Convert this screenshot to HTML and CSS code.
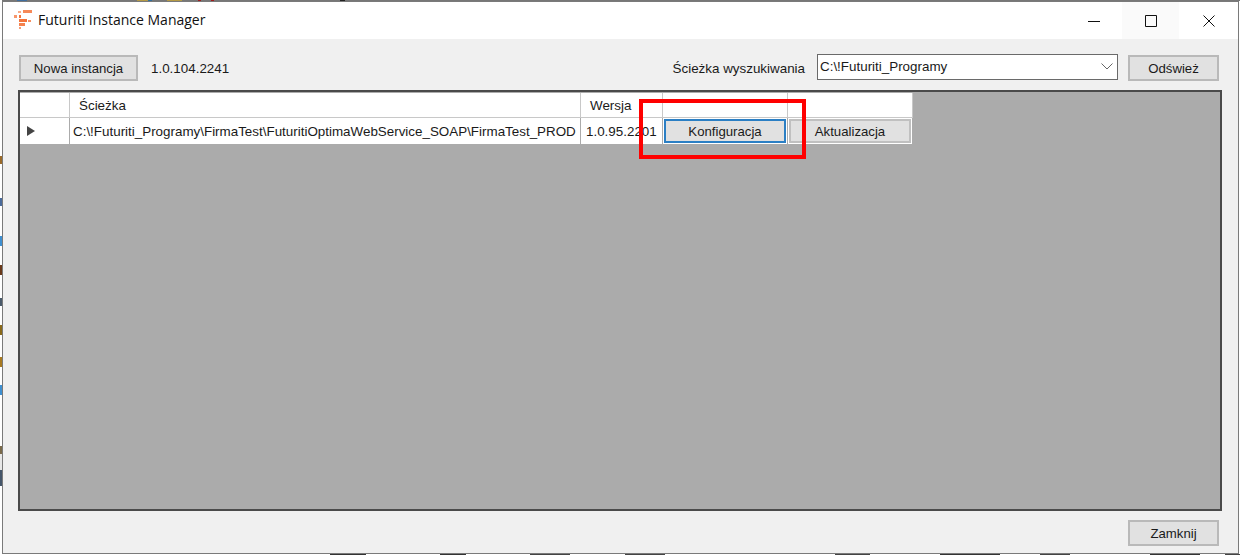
FILE: index.html
```html
<!DOCTYPE html>
<html lang="pl">
<head>
<meta charset="utf-8">
<title>Futuriti Instance Manager</title>
<link rel="stylesheet" href="styles.css">
</head>
<body>
<div class="backdrop-top"></div>
<div class="backdrop-left"></div>
<div class="backdrop-bottom"></div>
<div class="window">
  <header class="titlebar">
    <svg class="logo" width="20" height="20" viewBox="0 0 20 20">
      <g fill="#f4743b">
        <rect x="10" y="0" width="9" height="3" opacity=".85"/>
        <rect x="5" y="1" width="3" height="2" opacity=".6"/>
        <rect x="1" y="5" width="3" height="3" opacity=".75"/>
        <rect x="6" y="5" width="2" height="3"/>
        <rect x="6" y="9" width="8" height="3"/>
        <rect x="15" y="10" width="3" height="2" opacity=".8"/>
        <rect x="6" y="13" width="6" height="3" opacity=".9"/>
        <rect x="6" y="17" width="2" height="2" opacity=".7"/>
      </g>
    </svg>
    <span class="title">Futuriti Instance Manager</span>
    <div class="winctl">
      <span class="ctl"><svg width="12" height="12" viewBox="0 0 12 12"><path d="M0 6.500h12" stroke="#111" fill="none"/></svg></span>
      <span class="ctl ctl-hover"><svg width="12" height="12" viewBox="0 0 12 12"><path d="M.5.5h11v11H.5z" stroke="#111" fill="none"/></svg></span>
      <span class="ctl ctl-close"><svg width="12" height="12" viewBox="0 0 12 12"><path d="M.5.5l11 11M11.500.5l-11 11" stroke="#111" fill="none"/></svg></span>
    </div>
  </header>
  <main class="content">
    <div class="toolbar">
      <button class="btn btn-new">Nowa instancja</button>
      <span class="version">1.0.104.2241</span>
      <span class="search-label">Ścieżka wyszukiwania</span>
      <div class="combo">
        <span>C:\!Futuriti_Programy</span>
        <svg width="12" height="7" viewBox="0 0 12 7"><path d="M.5.5l5.500 5.500 5.500-5.500" stroke="#666" fill="none"/></svg>
      </div>
      <button class="btn btn-side">Odśwież</button>
    </div>
    <div class="grid">
      <div class="table">
        <div class="cell corner"></div>
        <div class="cell head">Ścieżka</div>
        <div class="cell head">Wersja</div>
        <div class="cell head"></div>
        <div class="cell head"></div>
        <div class="cell rowhead"><svg width="8" height="10" viewBox="0 0 8 10"><path d="M0 0l8 5-8 5z" fill="#444"/></svg></div>
        <div class="cell data">C:\!Futuriti_Programy\FirmaTest\FuturitiOptimaWebService_SOAP\FirmaTest_PROD</div>
        <div class="cell data data-version">1.0.95.2201</div>
        <div class="cell btncell"><button class="gridbtn gridbtn-focus">Konfiguracja</button></div>
        <div class="cell btncell"><button class="gridbtn">Aktualizacja</button></div>
      </div>
    </div>
    <div class="footer">
      <button class="btn btn-side">Zamknij</button>
    </div>
  </main>
  <div class="highlight"></div>
</div>
</body>
</html>
```
FILE: styles.css
```css
* { box-sizing: border-box; }
html, body { margin: 0; height: 100%; overflow: hidden; background: #fff; }
body { position: relative; padding: 1px 0 0 2px; font-family: "Liberation Sans", Arial, sans-serif; font-size: 13.400px; color: #1a1a1a; }

.backdrop-top { position: absolute; left: 0; top: 0; width: 100%; height: 1px; background: linear-gradient(90deg, #777 17px, #3f6d9e 17px 27px, #777 27px 137px, #b59a45 137px 148px, #2f6f9f 148px 152px, #777 152px 167px, #b59a45 167px 182px, #777 182px 198px, #a01c1c 198px 201px, #777 201px 211px, #a01c1c 211px 214px, #777 214px 340px, #222 340px 345px, #777 345px); }
.backdrop-left { position: absolute; left: 0; top: 0; width: 2px; height: 100%; background: linear-gradient(180deg, #fff 156px, #9a6a2a 156px 164px, #fff 164px 198px, #4a6a9a 198px 206px, #fff 206px 236px, #3f8fd0 236px 246px, #fff 246px 265px, #6a3a1a 265px 275px, #fff 275px 298px, #4a5a6a 298px 306px, #fff 306px 325px, #8a6a1a 325px 335px, #fff 335px 357px, #a87a20 357px 367px, #fff 367px 385px, #3f8fd0 385px 395px, #fff 395px 446px, #7a6a4a 446px 454px, #e8e8e8 454px 470px, #45566a 470px 486px, #fff 486px); }
.backdrop-bottom { position: absolute; left: 0; bottom: 0; width: 100%; height: 1px; background: linear-gradient(90deg, #fff 330px, #333 330px 366px, #fff 366px 440px, #333 440px 466px, #fff 466px 530px, #444 530px 570px, #fff 570px 625px, #444 625px 665px, #fff 665px 835px, #444 835px 870px, #fff 870px 940px, #333 940px 1000px, #fff 1000px 1040px, #444 1040px 1070px, #fff 1070px 1150px, #333 1150px 1200px, #fff 1200px 1225px, #444 1225px); }

.window { position: relative; display: flex; flex-direction: column; width: 1237px; height: 553px; border: 1px solid #7a7a7a; background: #f0f0f0; }
.titlebar { flex: none; display: flex; align-items: center; height: 37px; background: #fff; padding-left: 10px; }
.logo { flex: none; margin-bottom: 2px; }
.title { margin: 0 0 2px 5px; font-family: "Open Sans", sans-serif; font-size: 14px; color: #111; }
.winctl { margin-left: auto; display: flex; height: 100%; }
.ctl { width: 57px; display: flex; align-items: center; justify-content: center; }
.ctl-close { width: 59px; }
.ctl-hover { background: #fafafa; }

.content { flex: 1; display: flex; flex-direction: column; padding: 16px 19px 0 16px; }
.toolbar { display: flex; align-items: center; height: 26px; }
.btn { height: 26px; background: #e1e1e1; border: 2px solid #b9b9b9; font: inherit; font-size: 13.200px; color: #1a1a1a; padding: 0; }
.btn-new { width: 119px; }
.version { margin-left: 13px; }
.search-label { margin-left: auto; }
.combo { display: flex; align-items: center; justify-content: space-between; width: 301px; height: 26px; margin: -2px 10px 0 12px; padding: 0 4px 1px 2px; background: #fff; border: 1px solid #6a6a6a; }
.btn-side { width: 91px; flex: none; }

.grid { flex: none; height: 421px; margin: 9px -3px 0 -1px; background: #ababab; border: 2px solid #4a4a4a; padding-top: 1px; }
.table { display: grid; grid-template-columns: 50px 511px 82px 125px 125px; grid-template-rows: 25px 27px; width: max-content; background: #fff; }
.cell { display: flex; align-items: center; white-space: nowrap; overflow: hidden; background: #fff; border-right: 1px solid #ababab; border-bottom: 1px solid #ababab; }
.corner, .head { border-color: #c8c8c8; }
.head { padding-left: 9px; }
.rowhead { padding-left: 7px; }
.data { padding-left: 3px; }
.data-version { padding-left: 5px; overflow: visible; }
.btncell { padding: 1px; }
.gridbtn { width: 100%; height: 24px; background: #e1e1e1; border: 2px solid #c0c0c0; font: inherit; font-size: 13.200px; color: #1a1a1a; padding: 0; }
.gridbtn-focus { border-color: #2b7fc4; }

.footer { display: flex; justify-content: flex-end; margin-top: 9px; }
.highlight { position: absolute; left: 636px; top: 97px; width: 167px; height: 60px; border: 4px solid #f00; }
```
